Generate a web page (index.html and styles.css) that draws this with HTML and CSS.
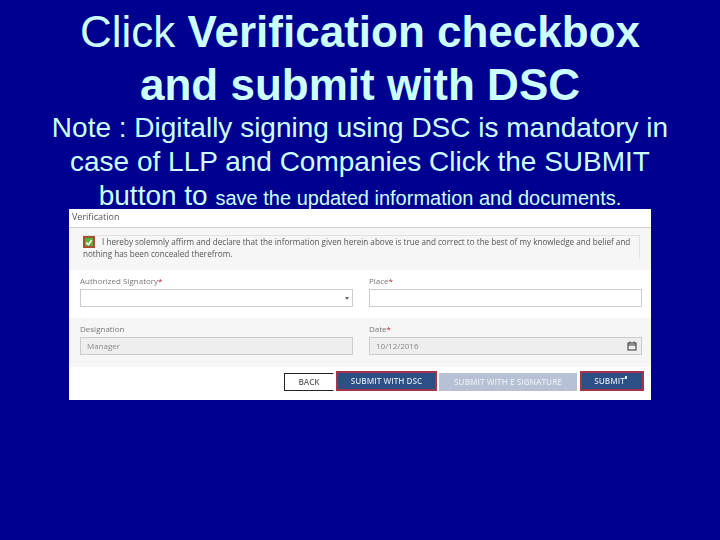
FILE: index.html
```html
<!DOCTYPE html>
<html lang="en">
  <head>
    <meta charset="UTF-8" />
    <meta name="viewport" content="width=device-width, initial-scale=1.0" />
    <title>Verification</title>
    <link rel="stylesheet" href="styles.css">
  </head>

  <body>
    <div class="slide">
      <h1 class="title">Click <b>Verification checkbox<br />and submit with DSC</b></h1>
      <p class="note">
        Note : Digitally signing using DSC is mandatory in<br />
        case of LLP and Companies Click the SUBMIT<br />
        button to <span class="note-small">save the updated information and documents.</span>
      </p>

      <div class="panel">
        <div class="panel-head">Verification</div>

        <div class="declare">
          <div class="declare-box">
            <span class="checkbox">
              <svg width="9" height="9" viewBox="0 0 9 9">
                <path d="M1.5 4.5 L3.7 7 L7.5 1.8" fill="none" stroke="#fff" stroke-width="1.8" />
              </svg>
            </span>
            I hereby solemnly affirm and declare that the information given herein above is true and correct to the best of my knowledge and belief and nothing has been concealed therefrom.
          </div>
        </div>

        <div class="form-row">
          <div class="field">
            <label>Authorized Signatory<i>*</i></label>
            <div class="input">
              <span class="caret"></span>
            </div>
          </div>
          <div class="field">
            <label>Place<i>*</i></label>
            <div class="input"></div>
          </div>
        </div>

        <div class="form-row grey">
          <div class="field">
            <label>Designation</label>
            <div class="input disabled">Manager</div>
          </div>
          <div class="field">
            <label>Date<i>*</i></label>
            <div class="input disabled date">
              10/12/2016
              <svg width="10" height="10" viewBox="0 0 10 10">
                <rect x="1" y="2" width="8" height="7" fill="none" stroke="#333" stroke-width="1" />
                <path d="M1 4 H9 M3 0.5 V2.5 M7 0.5 V2.5" stroke="#333" stroke-width="1" />
              </svg>
            </div>
          </div>
        </div>

        <div class="actions">
          <button class="btn back">BACK</button>
          <button class="btn primary marked dsc">SUBMIT WITH DSC</button>
          <button class="btn faded">SUBMIT WITH E SIGNATURE</button>
          <button class="btn primary marked submit">SUBMIT<span class="tick"></span></button>
        </div>
      </div>
    </div>
  </body>
</html>
```

FILE: styles.css
```css
* {
  box-sizing: border-box;
}

body {
  margin: 0;
  background-color: #000090;
  font-family: "Liberation Sans", Arial, sans-serif;
}

.slide {
  width: 720px;
  height: 540px;
  overflow: hidden;
  display: flex;
  flex-direction: column;
  align-items: center;
  color: #ccffff;
  text-align: center;
}

.title {
  margin: 5px 0 0;
  font-size: 44px;
  font-weight: normal;
  line-height: 53px;
}

.note {
  margin: 0;
  font-size: 28px;
  line-height: 34px;
  height: 98px;
  white-space: nowrap;
}

.note-small {
  font-size: 20px;
}

.panel {
  position: relative;
  width: 582px;
  height: 191px;
  background-color: #fff;
  color: #777;
  font-family: "Open Sans", sans-serif;
  font-size: 8px;
  text-align: left;
  filter: blur(0.5px);
}

.panel-head {
  height: 19px;
  padding: 1px 3px;
  font-size: 9px;
  color: #555;
  border-bottom: 1px solid #ccc;
}

.declare {
  height: 42px;
  padding: 7px 11px 0 12px;
  background-color: #f6f6f6;
}

.declare-box {
  height: 24px;
  padding: 0 0 0 2px;
  border: 1px solid #e2e2e2;
  border-width: 1px 1px 0 0;
  color: #555;
  font-size: 8.15px;
  line-height: 12px;
}

.checkbox {
  display: inline-flex;
  justify-content: center;
  align-items: center;
  width: 12px;
  height: 12px;
  margin-right: 5px;
  vertical-align: top;
  background-color: #5cb040;
  border: 2px solid #a5502f;
}

.form-row {
  display: grid;
  grid-template-columns: 273px 273px;
  gap: 16px;
  height: 48px;
  padding: 5px 0 0 11px;
}

.form-row.grey {
  height: 49px;
  background-color: #f6f6f6;
}

.field label {
  display: block;
  height: 14px;
  line-height: 12px;
}

.field i {
  color: #c02030;
  font-style: normal;
}

.input {
  position: relative;
  height: 18px;
  padding-left: 6px;
  background-color: #fff;
  border: 1px solid #ccc;
  line-height: 16px;
}

.input.disabled {
  background-color: #eee;
  color: #888;
}

.input.date {
  display: flex;
  justify-content: space-between;
  align-items: center;
  padding-right: 4px;
}

.caret {
  position: absolute;
  right: 3px;
  top: 7px;
  border-top: 3px solid #666;
  border-left: 2px solid transparent;
  border-right: 2px solid transparent;
}

.actions {
  display: flex;
  align-items: center;
  gap: 2px;
  height: 27px;
  padding-left: 215px;
}

.btn {
  height: 20px;
  padding: 0;
  border: 0;
  font-family: "Open Sans", sans-serif;
  font-size: 8.2px;
  font-weight: 600;
}

.back {
  width: 50px;
  height: 18px;
  margin-top: 2px;
  background-color: #fff;
  color: #666;
  border: 1px solid #222;
  border-right-color: #fff;
}

.primary {
  background-color: #2c4f86;
  color: #d5deeb;
}

.marked {
  border: 2px solid #a5344a;
}

.dsc {
  width: 101px;
}

.faded {
  width: 138px;
  height: 18px;
  margin-top: 2px;
  background-color: #b6c1d6;
  color: #e6ebf2;
}

.submit {
  position: relative;
  width: 64px;
  margin-left: 1px;
  padding-right: 5px;
}

.tick {
  position: absolute;
  top: 3px;
  right: 15px;
  width: 2px;
  height: 3px;
  background-color: #dfe6f0;
}
```
